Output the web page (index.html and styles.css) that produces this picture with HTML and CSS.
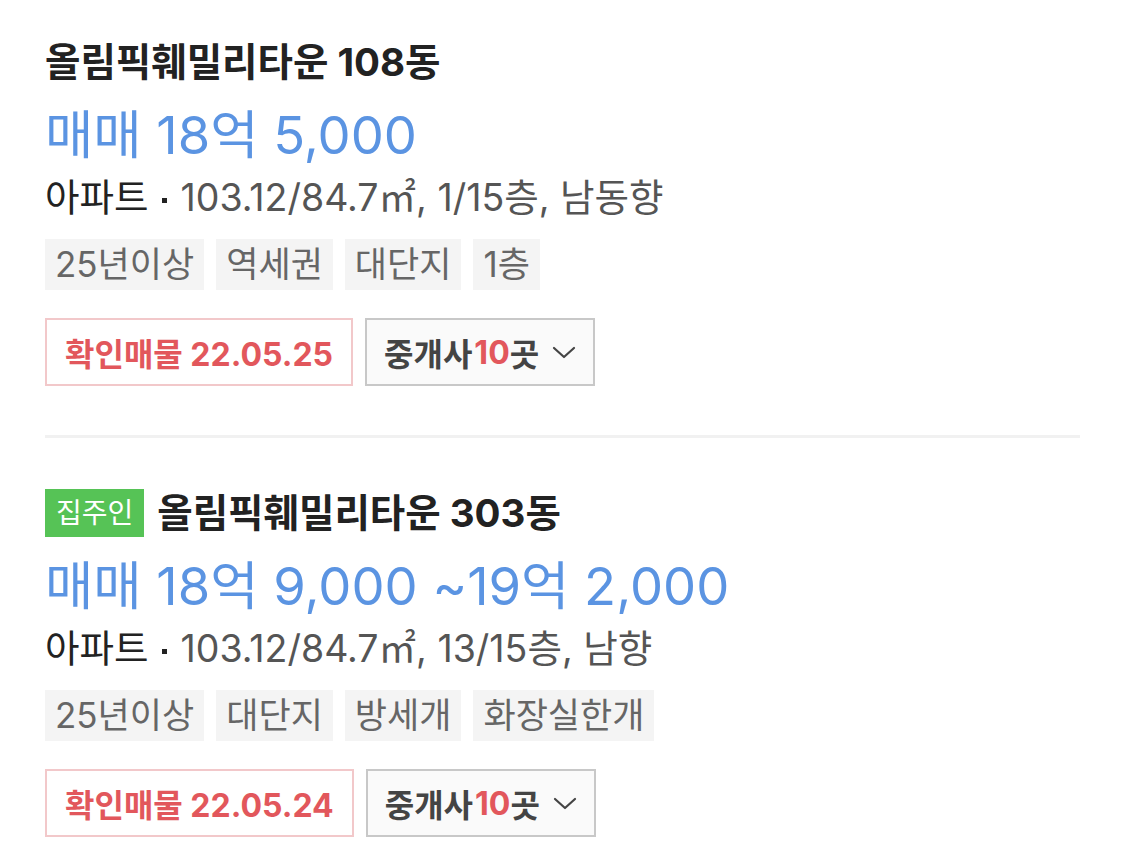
FILE: index.html
```html
<!DOCTYPE html>
<html lang="ko">
<head>
    <meta charset="UTF-8">
    <meta name="viewport" content="width=device-width, initial-scale=1.0">
    <title>매물 목록</title>
    <link rel="stylesheet" href="styles.css">
</head>
<body>
    <div class="list">
        <div class="item">
            <div class="item-head">
                <h2 class="item-title">올림픽훼밀리타운 108동</h2>
            </div>
            <div class="price">매매 18억 5,000</div>
            <div class="spec"><span class="spec-type">아파트</span><span class="spec-dot"></span>103.12/84.7㎡, 1/15층, 남동향</div>
            <div class="tags">
                <span class="tag">25년이상</span>
                <span class="tag">역세권</span>
                <span class="tag">대단지</span>
                <span class="tag">1층</span>
            </div>
            <div class="actions">
                <span class="confirm">확인매물 22.05.25</span>
                <button type="button" class="agents">중개사<em>10</em>곳
                    <svg class="chevron" width="24" height="13" viewBox="0 0 24 13"><path d="M2 2 L12 11 L22 2" fill="none" stroke="#444" stroke-width="2.2" stroke-linecap="round" stroke-linejoin="round"/></svg>
                </button>
            </div>
        </div>

        <div class="item">
            <div class="item-head">
                <span class="badge">집주인</span>
                <h2 class="item-title">올림픽훼밀리타운 303동</h2>
            </div>
            <div class="price">매매 18억 9,000 ~19억 2,000</div>
            <div class="spec"><span class="spec-type">아파트</span><span class="spec-dot"></span>103.12/84.7㎡, 13/15층, 남향</div>
            <div class="tags">
                <span class="tag">25년이상</span>
                <span class="tag">대단지</span>
                <span class="tag">방세개</span>
                <span class="tag">화장실한개</span>
            </div>
            <div class="actions">
                <span class="confirm">확인매물 22.05.24</span>
                <button type="button" class="agents">중개사<em>10</em>곳
                    <svg class="chevron" width="24" height="13" viewBox="0 0 24 13"><path d="M2 2 L12 11 L22 2" fill="none" stroke="#444" stroke-width="2.2" stroke-linecap="round" stroke-linejoin="round"/></svg>
                </button>
            </div>
        </div>
    </div>
</body>
</html>
```

FILE: styles.css
```css
body {
    margin: 0;
    background-color: white;
    font-family: Inter, "Noto Sans CJK KR", sans-serif;
    color: #222;
}

.list {
    padding: 0 45px;
}

.item {
    padding: 51px 0 49px;
}

.item:first-child {
    padding-top: 38px;
    border-bottom: 3px solid #f1f1f1;
}

.item-head {
    display: flex;
    align-items: center;
    height: 48px;
}

.item-title {
    margin: 0;
    font-size: 38.5px;
    font-weight: 700;
    line-height: 48px;
    color: #222;
}

.badge {
    display: inline-block;
    margin-right: 13px;
    padding: 0 11px;
    height: 48px;
    line-height: 48px;
    background-color: #56c356;
    color: white;
    font-size: 28px;
}

.price {
    margin-top: 19px;
    font-size: 52.5px;
    line-height: 60px;
    color: #5b94e2;
}

.spec {
    margin-top: 13px;
    font-size: 37.5px;
    line-height: 40px;
    color: #555;
}

.spec-type {
    color: #222;
}

.spec-dot {
    display: inline-block;
    width: 5px;
    height: 5px;
    margin: 0 14px 0 13px;
    vertical-align: middle;
    background-color: #222;
}

.tags {
    display: flex;
    gap: 12px;
    margin-top: 21px;
}

.tag {
    padding: 0 10px;
    height: 51px;
    line-height: 51px;
    background-color: #f4f4f4;
    color: #666;
    font-size: 35px;
}

.actions {
    display: flex;
    gap: 12px;
    margin-top: 28px;
}

.confirm, .agents {
    display: flex;
    align-items: center;
    box-sizing: border-box;
    height: 68px;
    padding: 0 17px;
    font-family: inherit;
    font-size: 32px;
    font-weight: 700;
}

.confirm {
    border: 2px solid #f2c8ca;
    color: #e2575c;
    padding: 0 18px;
}

.agents {
    border: 2px solid #c8c8c8;
    background-color: #fafafa;
    color: #444;
}

.agents em {
    font-style: normal;
    color: #e2575c;
    margin-left: 2px;
}

.chevron {
    margin-left: 13px;
}
```
